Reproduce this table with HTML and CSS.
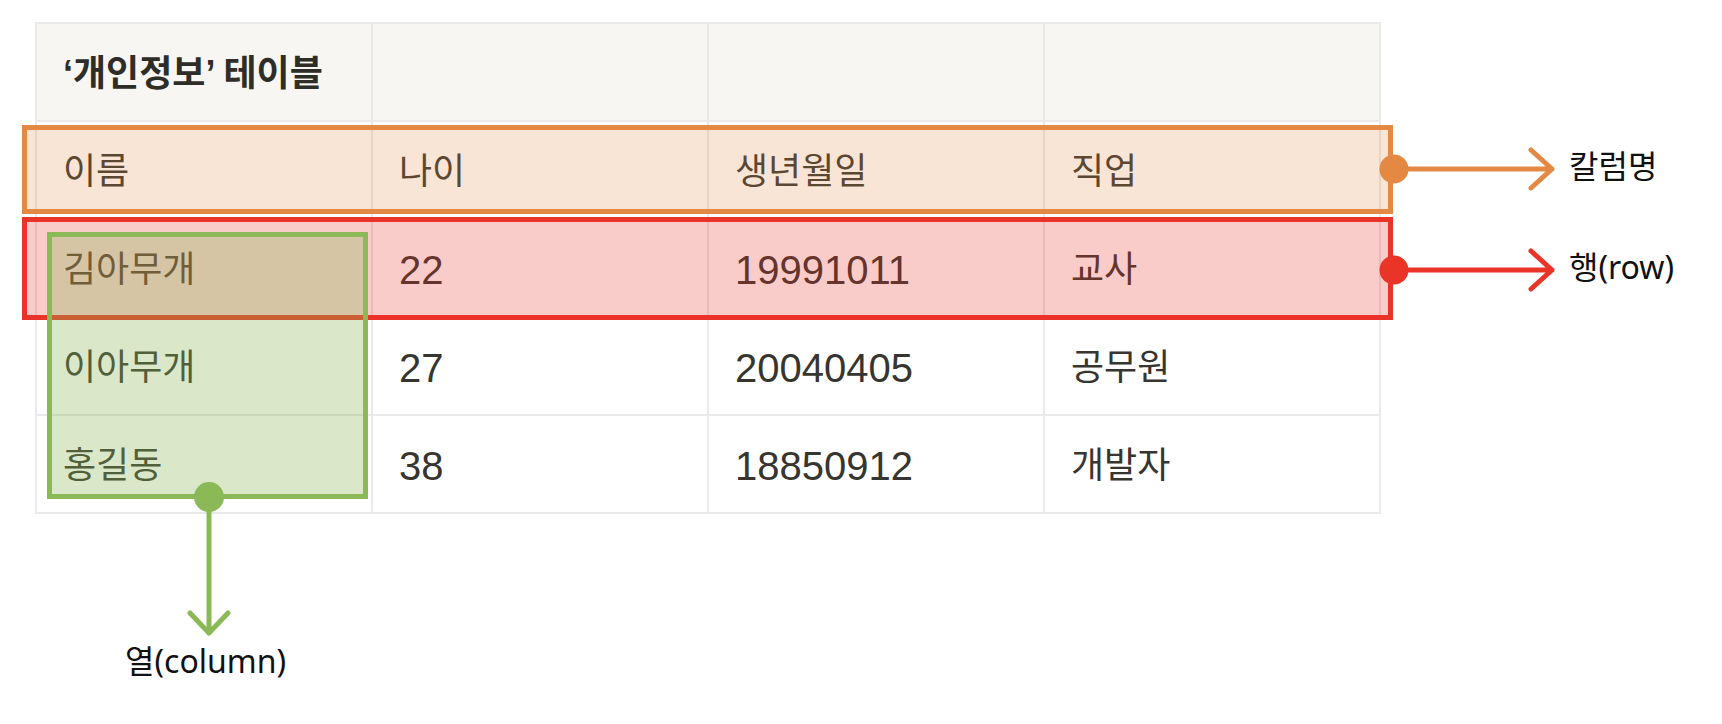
FILE: index.html
```html
<!DOCTYPE html>
<html>
<head>
    <meta charset="utf-8">
    <title>개인정보 테이블</title>
    <link rel="stylesheet" href="styles.css">
</head>
<body>
    <div class="figure">
        <table class="info-table">
            <tr class="title-row">
                <td class="title">‘개인정보’ 테이블</td>
                <td></td>
                <td></td>
                <td></td>
            </tr>
            <tr>
                <td>이름</td>
                <td>나이</td>
                <td>생년월일</td>
                <td>직업</td>
            </tr>
            <tr>
                <td>김아무개</td>
                <td class="num">22</td>
                <td class="num">19991011</td>
                <td>교사</td>
            </tr>
            <tr>
                <td>이아무개</td>
                <td class="num">27</td>
                <td class="num">20040405</td>
                <td>공무원</td>
            </tr>
            <tr>
                <td>홍길동</td>
                <td class="num">38</td>
                <td class="num">18850912</td>
                <td>개발자</td>
            </tr>
        </table>

        <!-- highlight boxes drawn over the table -->
        <div class="mark mark-header"></div>
        <div class="mark mark-row"></div>
        <div class="mark mark-col"></div>

        <svg class="pointers" width="1722" height="724" viewBox="0 0 1722 724">
            <g fill="none" stroke-width="5" stroke-linecap="round" stroke-linejoin="round">
                <path stroke="#e48943" d="M1394 169H1552M1531 150L1552 169L1531 188"/>
                <path stroke="#ea3427" d="M1394 270H1552M1531 251L1552 270L1531 289"/>
                <path stroke="#8bb958" d="M209 497V633M190 613L209 633L228 613"/>
            </g>
            <circle cx="1394" cy="169" r="14.5" fill="#e48943"/>
            <circle cx="1394" cy="270" r="14.5" fill="#ea3427"/>
            <circle cx="209" cy="497" r="15" fill="#8bb958"/>
        </svg>

        <span class="label label-header">칼럼명</span>
        <span class="label label-row">행(row)</span>
        <span class="label label-col">열(column)</span>
    </div>
</body>
</html>
```

FILE: styles.css
```css
* {
    box-sizing: border-box;
}

body {
    margin: 0;
    background: #ffffff;
}

.figure {
    position: relative;
    width: 1722px;
    height: 724px;
    padding: 22px 0 0 35px;
}

/* Notion-style table */
.info-table {
    border-collapse: separate;
    border-spacing: 0;
    table-layout: fixed;
    width: 1346px;
    border-top: 2px solid #e9e9e7;
    border-left: 2px solid #e9e9e7;
    font-family: "Liberation Sans", "Noto Sans CJK KR", sans-serif;
    font-size: 36px;
    color: #37352f;
}

.info-table td {
    box-sizing: content-box;
    height: 93px;
    padding: 3px 0 0 26px;
    border-right: 2px solid #e9e9e7;
    border-bottom: 2px solid #e9e9e7;
    vertical-align: middle;
    line-height: 40px;
    white-space: nowrap;
}

.title-row td {
    background: #f7f6f3;
}

.info-table .title {
    font-weight: 700;
    color: #2f2d28;
}

.info-table .num {
    font-size: 40px;
}

/* annotation overlays */
.mark {
    position: absolute;
    border: 5px solid;
}

.mark-header {
    left: 22px;
    top: 125px;
    width: 1371px;
    height: 89px;
    border-color: #e48943;
    background: rgba(228, 137, 67, 0.22);
}

.mark-row {
    left: 22px;
    top: 217px;
    width: 1371px;
    height: 103px;
    border-color: #ea3427;
    background: rgba(234, 52, 39, 0.25);
}

.mark-col {
    left: 47px;
    top: 232px;
    width: 321px;
    height: 267px;
    border-color: #8bb958;
    background: rgba(139, 185, 88, 0.32);
}

.pointers {
    position: absolute;
    left: 0;
    top: 0;
}

.label {
    position: absolute;
    font-family: "Noto Sans", "Noto Sans CJK KR", sans-serif;
    font-size: 32px;
    line-height: 40px;
    color: #111111;
    white-space: nowrap;
}

.label-header {
    left: 1569px;
    top: 146px;
}

.label-row {
    left: 1569px;
    top: 247px;
}

.label-col {
    left: 125px;
    top: 641px;
}
```
